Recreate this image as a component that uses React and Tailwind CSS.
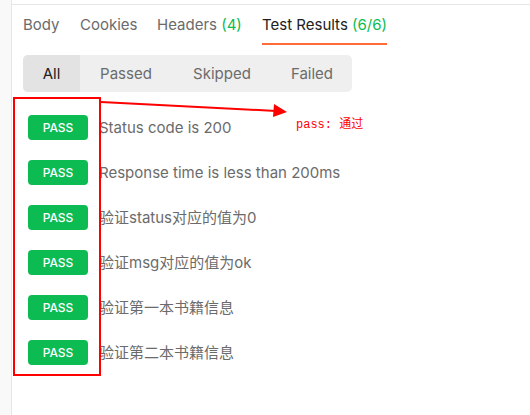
import React from "react";

const tests = [
  "Status code is 200",
  "Response time is less than 200ms",
  "验证status对应的值为0",
  "验证msg对应的值为ok",
  "验证第一本书籍信息",
  "验证第二本书籍信息",
];

const font = "font-['Inter','Noto_Sans_CJK_SC',sans-serif]";

export default function App() {
  return (
    <div className={`relative flex h-[415px] w-[530px] bg-white ${font}`}>
      {/* left gutter */}
      <div className="w-[12px] shrink-0 border-r border-[#e6e6e6] bg-[#f9f9f9]" />

      <div className="flex-1 pt-[4px]">
        <div className="border-t border-[#e6e6e6]">
          {/* TABS */}
          <div className="flex h-[40px] items-end pl-[11px] text-[15px] text-[#6b6b6b]">
            <div className="w-[57px] pb-[9px]">Body</div>
            <div className="w-[77px] pb-[9px]">Cookies</div>
            <div className="w-[105px] pb-[9px]">
              Headers <span className="text-[#0cbb52]">(4)</span>
            </div>
            <div className="border-b-2 border-[#ff6c37] pb-[7px] text-[#212121]">
              Test Results <span className="text-[#0cbb52]">(6/6)</span>
            </div>
          </div>

          {/* FILTER */}
          <div className="ml-[11px] mt-[10px] flex h-[37px] w-[329px] overflow-hidden rounded-[5px] bg-[#efefef] pt-[1px] text-[15px] text-[#6b6b6b]">
            <div className="-mt-[1px] flex w-[57px] items-center justify-center bg-[#e3e3e3] pt-[1px] text-[#212121]">All</div>
            <div className="flex w-[92px] items-center justify-center">Passed</div>
            <div className="flex w-[100px] items-center justify-center">Skipped</div>
            <div className="flex w-[80px] items-center justify-center">Failed</div>
          </div>

          {/* RESULTS */}
          <div className="mt-[23px] flex flex-col gap-[20px]">
            {tests.map((t, i) => (
              <div key={i} className="flex h-[25px] items-center">
                <div className="ml-[16px] flex h-[25px] w-[60px] items-center justify-center rounded-[4px] bg-[#0cbb52] text-[12px] font-medium text-white">
                  PASS
                </div>
                <div className="ml-[11px] pt-[2px] text-[15px] text-[#6b6b6b]">{t}</div>
              </div>
            ))}
          </div>
        </div>
      </div>

      {/* annotation */}
      <div className="absolute left-[13px] top-[97px] h-[279px] w-[88px] border-2 border-[#ff0000]" />
      <svg className="absolute left-0 top-0" width="530" height="415">
        <line x1="101" y1="102" x2="276" y2="111" stroke="#ff0000" strokeWidth="2" />
        <polygon points="274,104 287,112 273,117" fill="#ff0000" />
      </svg>
      <div className="absolute left-[296px] top-[117px] font-['Liberation_Mono','Noto_Sans_CJK_SC',monospace] text-[12px] leading-[16px] text-[#ff0000]">
        pass: 通过
      </div>
    </div>
  );
}
